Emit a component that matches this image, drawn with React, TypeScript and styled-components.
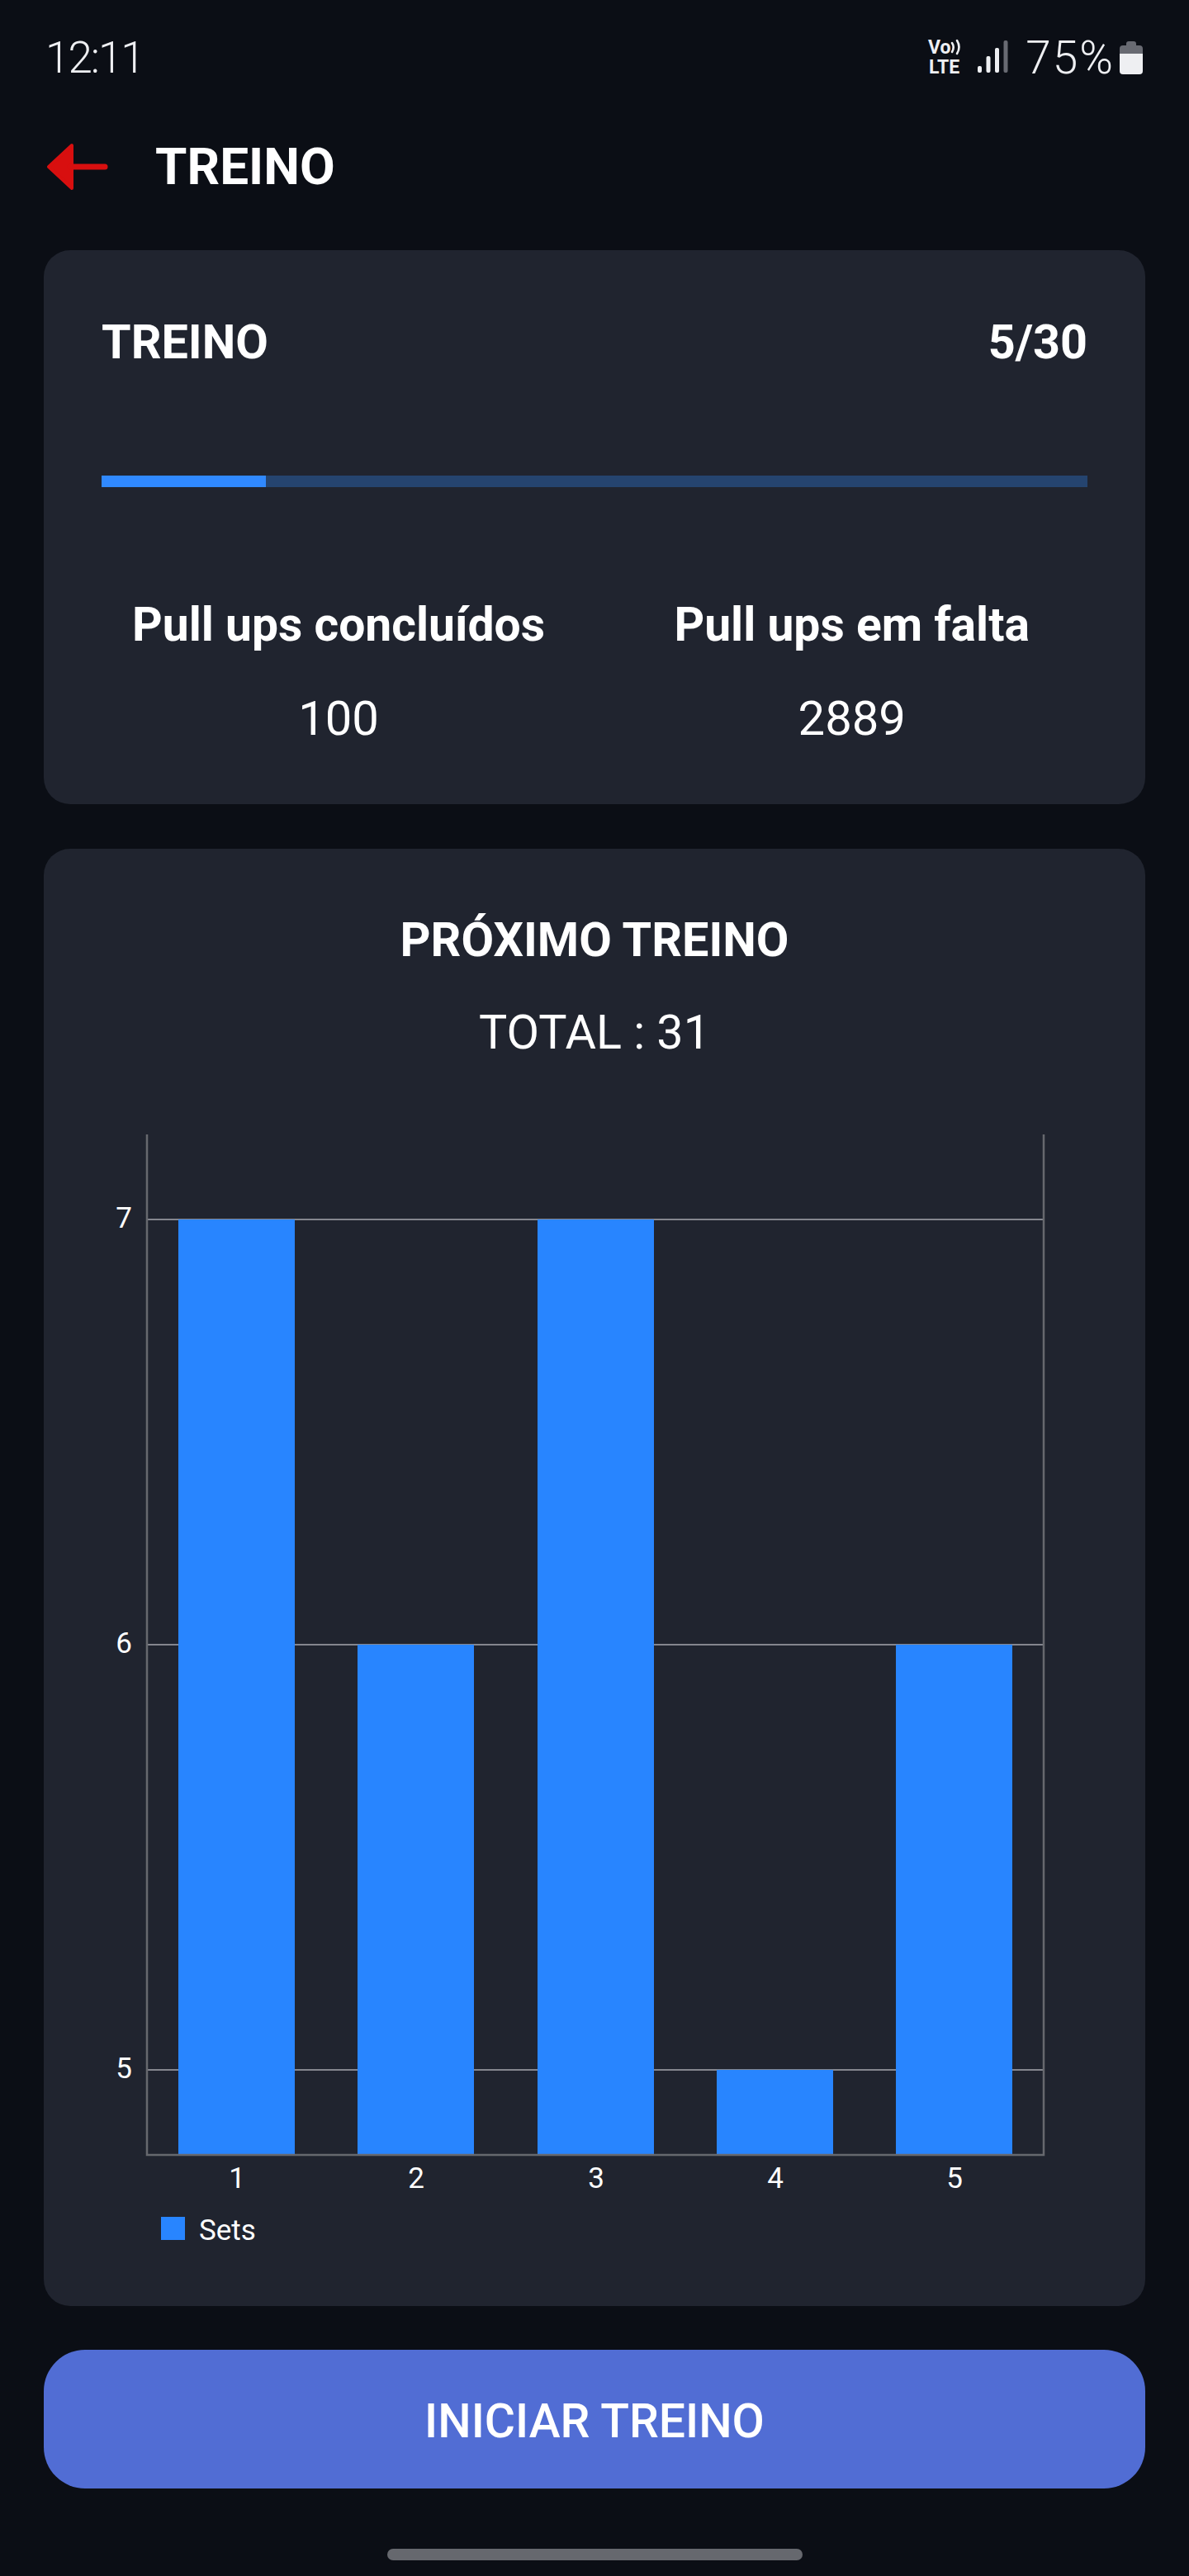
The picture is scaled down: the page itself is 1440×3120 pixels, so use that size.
import React from "react";
import styled, { createGlobalStyle } from "styled-components";

const Global = createGlobalStyle`
  html, body { margin: 0; padding: 0; background: #0b0e15; }
  body { font-family: Roboto, "Liberation Sans", sans-serif; color: #fff; }
  * { box-sizing: border-box; }
`;

const Page = styled.div`
  width: 1440px;
  height: 3120px;
  padding: 0 53px;
  display: flex;
  flex-direction: column;
  background: #0b0e15;
  overflow: hidden;
`;

const StatusBar = styled.div`
  height: 140px;
  padding: 0 3px 0 2px;
  display: flex;
  align-items: center;
  justify-content: space-between;
  color: #eeeff2;
`;

const StatusTime = styled.span`
  font-size: 53px;
  font-weight: 300;
  line-height: 1;
  letter-spacing: -2px;
`;

const StatusPercent = styled.span`
  font-size: 55px;
  font-weight: 300;
  line-height: 1;
  letter-spacing: 2px;
`;

const StatusIcons = styled.div`
  display: flex;
  align-items: center;
`;

const SignalIcon = styled.svg`
  display: block;
  width: 104px;
  height: 50px;
  margin-right: 16px;
`;

const BatteryIcon = styled.svg`
  display: block;
  width: 28px;
  height: 40px;
  margin-left: 6px;
`;

const Header = styled.header`
  height: 124px;
  margin-bottom: 39px;
  padding-left: 4px;
  display: flex;
  align-items: center;
  gap: 57px;
`;

const HeaderTitle = styled.h1`
  margin: 0;
  font-size: 62px;
  font-weight: 700;
  line-height: 66px;
`;

const Card = styled.section`
  background: #20242f;
  border-radius: 32px;
`;

const ProgressCard = styled(Card)`
  height: 671px;
  padding: 79px 70px 0;
`;

const CardTop = styled.div`
  display: flex;
  justify-content: space-between;
  font-size: 57.5px;
  font-weight: 700;
  line-height: 66px;
`;

const Track = styled.div`
  height: 14px;
  margin-top: 128px;
  background: #25446f;
`;

const Fill = styled.div`
  height: 100%;
  background: #3089ff;
`;

const Stats = styled.div`
  margin-top: 134px;
  padding: 0 70px 0 37px;
  display: flex;
  justify-content: space-between;
`;

const Stat = styled.div`
  display: flex;
  flex-direction: column;
  align-items: center;
  gap: 47px;
`;

const StatLabel = styled.div`
  font-size: 57px;
  font-weight: 700;
  line-height: 66px;
`;

const StatValue = styled.div`
  font-size: 58px;
  font-weight: 400;
  line-height: 66px;
`;

const NextCard = styled(Card)`
  margin-top: 54px;
  height: 1765px;
  padding-top: 78px;
  text-align: center;
`;

const NextTitle = styled.h2`
  margin: 0;
  font-size: 57.5px;
  font-weight: 700;
  line-height: 66px;
`;

const NextTotal = styled.div`
  margin-top: 46px;
  font-size: 57.5px;
  font-weight: 400;
  line-height: 66px;
`;

const Chart = styled.svg`
  display: block;
  margin-top: 56px;
  width: 1334px;
  height: 1420px;
  font-family: Roboto, "Liberation Sans", sans-serif;
`;

const StartButton = styled.button`
  margin-top: 53px;
  height: 168px;
  padding: 4px 0 0;
  width: 100%;
  border: 0;
  border-radius: 50px;
  background: #516dd4;
  color: #fff;
  font-family: inherit;
  font-size: 57px;
  font-weight: 500;
`;

const HomeBar = styled.div`
  align-self: center;
  width: 503px;
  height: 14px;
  margin-top: 73px;
  border-radius: 7px;
  background: #66686e;
`;

const bars = [7, 6, 7, 5, 6];
const yOf = (v: number) => 2507 - (v - 5) * 515;
const barX = [216, 433, 651, 868, 1085];

export default function App() {
  return (
    <>
      <Global />
      <Page>
        <StatusBar>
          <StatusTime>12:11</StatusTime>
          <StatusIcons>
            <SignalIcon viewBox="1120 45 104 50">
              <text x="1122" y="65" fontSize="23" fontWeight="700" fill="#eeeff2" fontFamily="Roboto, sans-serif">Vo</text>
              <text x="1123" y="89" fontSize="23" fontWeight="700" fill="#eeeff2" fontFamily="Roboto, sans-serif">LTE</text>
              <path d="M1151 52q3.500 5 0 11M1157 49q5 8 0 16" fill="none" stroke="#eeeff2" strokeWidth="2.600" strokeLinecap="round" />
              <rect x="1182" y="80" width="5" height="8" rx="2" fill="#eeeff2" />
              <rect x="1192.500" y="68" width="5" height="20" rx="2" fill="#eeeff2" />
              <rect x="1203" y="58" width="5" height="30" rx="2" fill="#eeeff2" />
              <rect x="1213.500" y="49" width="5" height="39" rx="2" fill="#686a72" />
            </SignalIcon>
            <StatusPercent>75%</StatusPercent>
            <BatteryIcon viewBox="0 0 28 40">
              <path d="M8 5V3a3 3 0 0 1 3-3h6a3 3 0 0 1 3 3v2h4a4 4 0 0 1 4 4v7H0V9a4 4 0 0 1 4-4z" fill="#686a72" />
              <path d="M0 15h28v21a4 4 0 0 1-4 4H4a4 4 0 0 1-4-4z" fill="#eeeff2" />
            </BatteryIcon>
          </StatusIcons>
        </StatusBar>

        <Header>
          <svg width="74" height="58" viewBox="0 0 74 58">
            <path d="M2 29L30 3V55Z" fill="#d80f0f" stroke="#d80f0f" strokeWidth="4" strokeLinejoin="round" />
            <path d="M28 29H70" stroke="#d80f0f" strokeWidth="7" strokeLinecap="round" />
          </svg>
          <HeaderTitle>TREINO</HeaderTitle>
        </Header>

        <ProgressCard>
          <CardTop>
            <span>TREINO</span>
            <span>5/30</span>
          </CardTop>
          <Track>
            <Fill style={{ width: `${(5 / 30) * 100}%` }} />
          </Track>
          <Stats>
            <Stat>
              <StatLabel>Pull ups concluídos</StatLabel>
              <StatValue>100</StatValue>
            </Stat>
            <Stat>
              <StatLabel>Pull ups em falta</StatLabel>
              <StatValue>2889</StatValue>
            </Stat>
          </Stats>
        </ProgressCard>

        <NextCard>
          <NextTitle>PRÓXIMO TREINO</NextTitle>
          <NextTotal>TOTAL : 31</NextTotal>
          <Chart viewBox="53 1340 1334 1420">
            {[7, 6, 5].map((v) => (
              <g key={v}>
                <line x1="178" x2="1264" y1={yOf(v)} y2={yOf(v)} stroke="#84868e" strokeWidth="2" />
                <text x="160" y={yOf(v) + 10} textAnchor="end" fontSize="35" fill="#fff">{v}</text>
              </g>
            ))}
            {bars.map((v, i) => (
              <g key={i}>
                <rect x={barX[i]} y={yOf(v)} width="141" height={2610 - yOf(v)} fill="#2885ff" />
                <text x={barX[i] + 71} y="2650" textAnchor="middle" fontSize="35" fill="#fff">{i + 1}</text>
              </g>
            ))}
            <path d="M178 1374V2610H1264V1374" fill="none" stroke="#66686e" strokeWidth="2.500" />
            <rect x="195" y="2685" width="29" height="28" fill="#2885ff" />
            <text x="241" y="2713" fontSize="35" fill="#fff">Sets</text>
          </Chart>
        </NextCard>

        <StartButton>INICIAR TREINO</StartButton>
        <HomeBar />
      </Page>
    </>
  );
}
